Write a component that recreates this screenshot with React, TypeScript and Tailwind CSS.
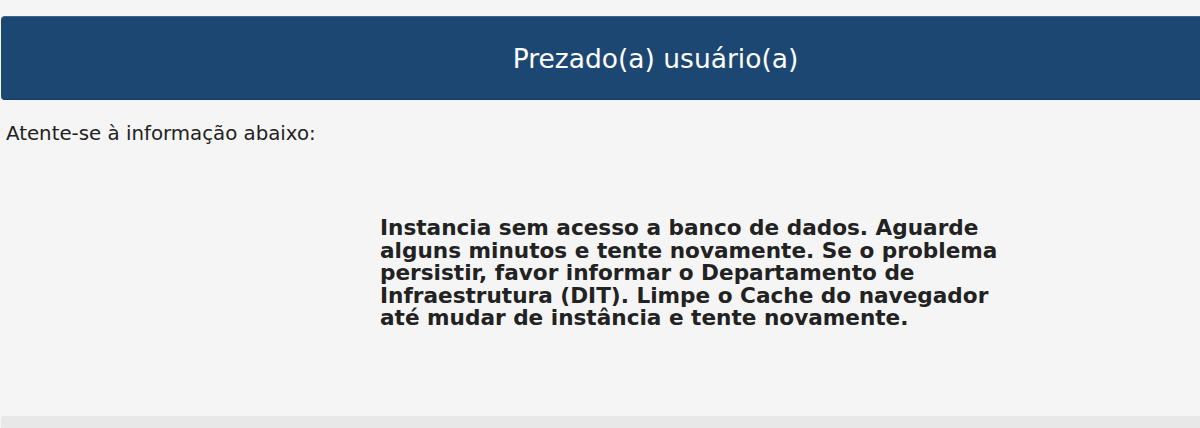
export default function App() {
  return (
    <div className="min-h-[428px] w-[1200px] overflow-hidden bg-[#f5f5f5] text-[#222]" style={{ fontFamily: '"DejaVu Sans", Verdana, sans-serif' }}>
      <div className="pt-4">
        <div className="ml-[1px] w-[1310px] h-[84px] rounded-[4px] bg-[#1d4773] border-t border-[#3d6590] border-b border-b-[#173a60] flex items-center justify-center">
          <h1 className="text-white text-[26.5px] leading-none mt-[3px] -ml-[1px]">Prezado(a) usuário(a)</h1>
        </div>
      </div>
      <p className="mt-[22px] ml-[6px] text-[19.8px] leading-[24px] text-[#222]">Atente-se à informação abaixo:</p>
      <div className="mt-[71px] ml-[380px] w-[640px]">
        <p className="font-bold text-[21.6px] leading-[22.6px] text-[#222]">
          Instancia sem acesso a banco de dados. Aguarde alguns minutos e tente novamente. Se o problema persistir, favor informar o Departamento de Infraestrutura (DIT). Limpe o Cache do navegador até mudar de instância e tente novamente.
        </p>
      </div>
      <div className="mt-[86px] ml-[1px] h-[20px] bg-[#e8e8e8] rounded-tl-[3px]"></div>
    </div>
  );
}
